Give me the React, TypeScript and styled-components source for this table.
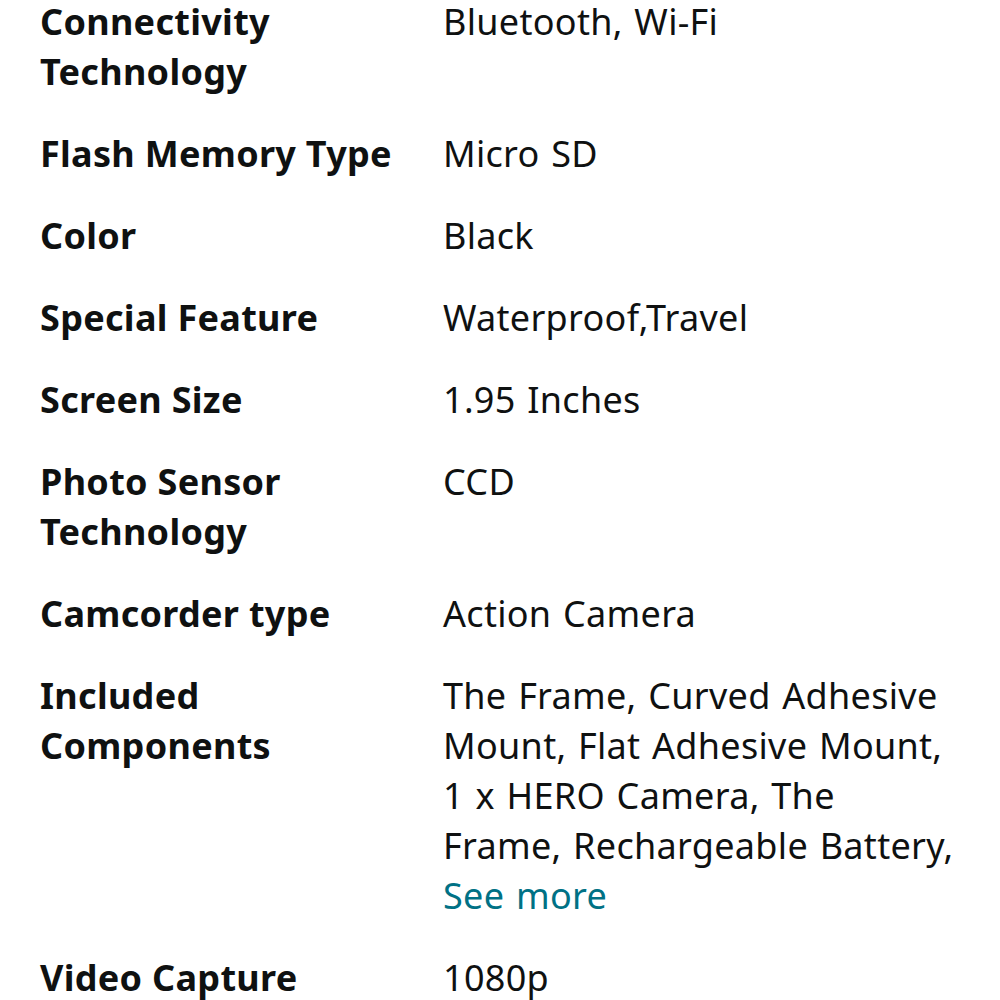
import React from "react";
import styled, { createGlobalStyle } from "styled-components";

const Global = createGlobalStyle`
  html, body { margin: 0; padding: 0; background: #ffffff; }
  body { font-family: "Noto Sans", "Open Sans", Arial, sans-serif; }
`;

const Page = styled.div`
  padding: 0 0 0 40px;
  margin-top: -3px;
  color: #0f1111;
`;

const Table = styled.div`
  display: grid;
  grid-template-columns: 403px 515px;
  row-gap: 32px;
  font-size: 36px;
  line-height: 50px;
  letter-spacing: 0.3px;
`;

const Label = styled.div`
  font-weight: 700;
  padding-right: 20px;
`;

const Value = styled.div`
  font-weight: 400;
  word-spacing: 2px;
`;

const SeeMore = styled.a`
  display: block;
  color: #007185;
  text-decoration: none;
`;

const rows: { label: string; value: string; more?: boolean }[] = [
  { label: "Connectivity Technology", value: "Bluetooth, Wi-Fi" },
  { label: "Flash Memory Type", value: "Micro SD" },
  { label: "Color", value: "Black" },
  { label: "Special Feature", value: "Waterproof,Travel" },
  { label: "Screen Size", value: "1.95 Inches" },
  { label: "Photo Sensor Technology", value: "CCD" },
  { label: "Camcorder type", value: "Action Camera" },
  {
    label: "Included Components",
    value:
      "The Frame, Curved Adhesive Mount, Flat Adhesive Mount, 1 x HERO Camera, The Frame, Rechargeable Battery,",
    more: true,
  },
  { label: "Video Capture", value: "1080p" },
];

export default function App() {
  return (
    <>
      <Global />
      <Page>
        <Table>
          {rows.map((r) => (
            <React.Fragment key={r.label}>
              <Label>{r.label}</Label>
              <Value>
                {r.value}
                {r.more && <SeeMore href="#">See more</SeeMore>}
              </Value>
            </React.Fragment>
          ))}
        </Table>
      </Page>
    </>
  );
}
